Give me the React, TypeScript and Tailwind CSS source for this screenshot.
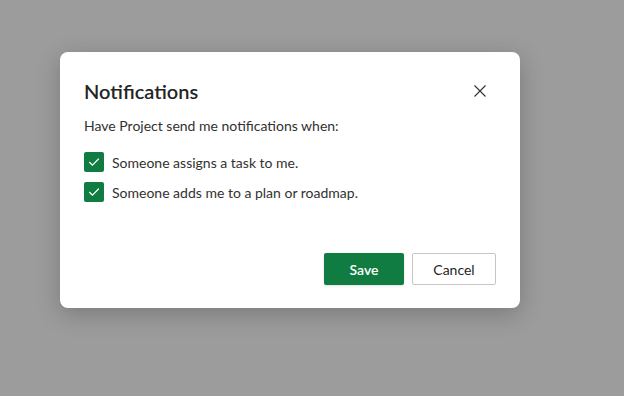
import { useState } from 'react';

function CheckRow({ label, checked, onToggle }: { label: string; checked: boolean; onToggle: () => void }) {
    return (
        <label className="flex items-center h-[30px] cursor-pointer" onClick={onToggle}>
            <span className={`w-5 h-5 rounded-[2px] flex items-center justify-center ${checked ? 'bg-[#107c41]' : 'border border-[#605e5c] bg-white'}`}>
                {checked && (
                    <svg width="12" height="12" viewBox="0 0 12 12" fill="none">
                        <path d="M1.5 6.3 L4.5 9.2 L10.5 3" stroke="white" strokeWidth="1.2" strokeLinecap="round" strokeLinejoin="round" />
                    </svg>
                )}
            </span>
            <span className="ml-2 text-[14px] text-[#323130]">{label}</span>
        </label>
    );
}

export default function App() {
    const [assign, setAssign] = useState(true);
    const [adds, setAdds] = useState(true);

    return (
        <div className="w-[624px] h-[396px] bg-[#9c9c9c] pt-[52px] pl-[60px]" style={{ fontFamily: 'Lato, "Noto Sans", sans-serif' }}>
            <div className="w-[460px] h-[256px] bg-white rounded-[8px] shadow-[0_6px_24px_rgba(0,0,0,0.22)] flex flex-col px-6 pt-[25px] pb-[23px]">
                <div className="flex items-center justify-between h-[28px]">
                    <h1 className="text-[20px] font-semibold text-[#242424] leading-[28px]">Notifications</h1>
                    <button className="w-8 h-8 flex items-center justify-center">
                        <svg width="14" height="14" viewBox="0 0 14 14" fill="none">
                            <path d="M1.5 1.5 L12.5 12.5 M12.5 1.5 L1.5 12.5" stroke="#323130" strokeWidth="1.1" />
                        </svg>
                    </button>
                </div>
                <p className="mt-[11px] text-[14px] text-[#323130] leading-[20px]">Have Project send me notifications when:</p>
                <div className="mt-[11px] flex flex-col">
                    <CheckRow label="Someone assigns a task to me." checked={assign} onToggle={() => setAssign(!assign)} />
                    <CheckRow label="Someone adds me to a plan or roadmap." checked={adds} onToggle={() => setAdds(!adds)} />
                </div>
                <div className="mt-auto flex justify-end gap-2">
                    <button className="w-[80px] h-[32px] rounded-[2px] bg-[#107c41] text-white text-[14px] font-semibold shadow-sm">Save</button>
                    <button className="w-[84px] h-[32px] rounded-[2px] border border-[#c8c6c4] bg-white text-[#242424] text-[14px]">Cancel</button>
                </div>
            </div>
        </div>
    );
}
